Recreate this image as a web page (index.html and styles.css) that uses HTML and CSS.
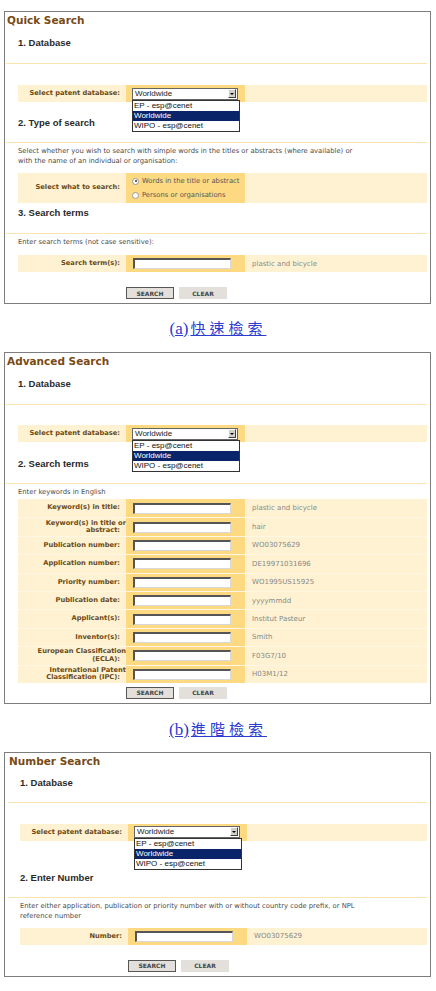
FILE: index.html
```html
<!DOCTYPE html>
<html lang="zh-Hant">
<head>
    <meta charset="UTF-8">
    <meta name="viewport" content="width=device-width, initial-scale=1.0">
    <title>esp@cenet 檢索</title>
    <link rel="stylesheet" href="styles.css">
</head>
<body>
    <!-- (a) quick search -->
    <div class="panel first">
        <div class="panel-title">Quick Search</div>
        <div class="step mt6">1. Database</div>
        <div class="rule mt12"></div>
        <div class="form-row mt21">
            <div class="label">Select patent database:</div>
            <div class="field">
                <div class="select">
                    <span class="select-value">Worldwide</span>
                    <span class="select-arrow"></span>
                    <ul class="select-list">
                        <li>EP - esp@cenet</li>
                        <li class="on">Worldwide</li>
                        <li>WIPO - esp@cenet</li>
                    </ul>
                </div>
            </div>
            <div class="hint"></div>
        </div>
        <div class="step mt13">2. Type of search</div>
        <div class="rule mt11"></div>
        <div class="note mt3">Select whether you wish to search with simple words in the titles or abstracts (where available) or<br>with the name of an individual or organisation:</div>
        <div class="form-row choice-row mt7">
            <div class="label">Select what to search:</div>
            <div class="field choices">
                <div class="choice"><span class="radio checked"></span>Words in the title or abstract</div>
                <div class="choice"><span class="radio"></span>Persons or organisations</div>
            </div>
            <div class="hint"></div>
        </div>
        <div class="step mt2">3. Search terms</div>
        <div class="rule mt12"></div>
        <div class="note mt3">Enter search terms (not case sensitive):</div>
        <div class="form-row mt8">
            <div class="label">Search term(s):</div>
            <div class="field"><input class="text-input" type="text"></div>
            <div class="hint">plastic and bicycle</div>
        </div>
        <div class="buttons mt15">
            <button class="btn default">SEARCH</button>
            <button class="btn">CLEAR</button>
        </div>
    </div>

    <div class="caption"><span class="caption-text">(a)<span class="caption-zh">快速檢索</span></span></div>

    <!-- (b) advanced search -->
    <div class="panel">
        <div class="panel-title">Advanced Search</div>
        <div class="step mt6">1. Database</div>
        <div class="rule mt12"></div>
        <div class="form-row mt20">
            <div class="label">Select patent database:</div>
            <div class="field">
                <div class="select">
                    <span class="select-value">Worldwide</span>
                    <span class="select-arrow"></span>
                    <ul class="select-list">
                        <li>EP - esp@cenet</li>
                        <li class="on">Worldwide</li>
                        <li>WIPO - esp@cenet</li>
                    </ul>
                </div>
            </div>
            <div class="hint"></div>
        </div>
        <div class="step mt14">2. Search terms</div>
        <div class="rule mt11"></div>
        <div class="note mt3">Enter keywords in English</div>
        <div class="form-table mt2">
            <div class="form-row tall">
                <div class="label">Keyword(s) in title:</div>
                <div class="field"><input class="text-input" type="text"></div>
                <div class="hint">plastic and bicycle</div>
            </div>
            <div class="form-row tall">
                <div class="label"><span class="over">Keyword(s) in title or</span>abstract:</div>
                <div class="field"><input class="text-input" type="text"></div>
                <div class="hint">hair</div>
            </div>
            <div class="form-row tall">
                <div class="label">Publication number:</div>
                <div class="field"><input class="text-input" type="text"></div>
                <div class="hint">WO03075629</div>
            </div>
            <div class="form-row tall">
                <div class="label">Application number:</div>
                <div class="field"><input class="text-input" type="text"></div>
                <div class="hint">DE19971031696</div>
            </div>
            <div class="form-row tall">
                <div class="label">Priority number:</div>
                <div class="field"><input class="text-input" type="text"></div>
                <div class="hint">WO1995US15925</div>
            </div>
            <div class="form-row tall">
                <div class="label">Publication date:</div>
                <div class="field"><input class="text-input" type="text"></div>
                <div class="hint">yyyymmdd</div>
            </div>
            <div class="form-row tall">
                <div class="label">Applicant(s):</div>
                <div class="field"><input class="text-input" type="text"></div>
                <div class="hint">Institut Pasteur</div>
            </div>
            <div class="form-row tall">
                <div class="label">Inventor(s):</div>
                <div class="field"><input class="text-input" type="text"></div>
                <div class="hint">Smith</div>
            </div>
            <div class="form-row tall">
                <div class="label"><span class="over">European Classification</span>(ECLA):</div>
                <div class="field"><input class="text-input" type="text"></div>
                <div class="hint">F03G7/10</div>
            </div>
            <div class="form-row tall">
                <div class="label"><span class="over">International Patent</span>Classification (IPC):</div>
                <div class="field"><input class="text-input" type="text"></div>
                <div class="hint">H03M1/12</div>
            </div>
        </div>
        <div class="buttons mt4">
            <button class="btn default">SEARCH</button>
            <button class="btn">CLEAR</button>
        </div>
    </div>

    <div class="caption lower"><span class="caption-text">(b)<span class="caption-zh">進階檢索</span></span></div>

    <!-- number search -->
    <div class="panel shifted">
        <div class="panel-title">Number Search</div>
        <div class="step mt5">1. Database</div>
        <div class="rule mt11"></div>
        <div class="form-row mt21">
            <div class="label">Select patent database:</div>
            <div class="field">
                <div class="select">
                    <span class="select-value">Worldwide</span>
                    <span class="select-arrow"></span>
                    <ul class="select-list">
                        <li>EP - esp@cenet</li>
                        <li class="on">Worldwide</li>
                        <li>WIPO - esp@cenet</li>
                    </ul>
                </div>
            </div>
            <div class="hint"></div>
        </div>
        <div class="step mt29">2. Enter Number</div>
        <div class="rule mt11"></div>
        <div class="note mt3">Enter either application, publication or priority number with or without country code prefix, or NPL<br>reference number</div>
        <div class="form-row mt7">
            <div class="label">Number:</div>
            <div class="field"><input class="text-input" type="text"></div>
            <div class="hint">WO03075629</div>
        </div>
        <div class="buttons mt15">
            <button class="btn default">SEARCH</button>
            <button class="btn">CLEAR</button>
        </div>
    </div>
</body>
</html>
```

FILE: styles.css
```css
body {
    margin: 0;
    background: #fff;
    font-family: "Liberation Sans", Arial, sans-serif;
    color: #222;
}

/* spacing helpers */
.mt2 { margin-top: 2px; }
.mt3 { margin-top: 3px; }
.mt4 { margin-top: 4px; }
.mt5 { margin-top: 5px; }
.mt6 { margin-top: 6px; }
.mt7 { margin-top: 7px; }
.mt8 { margin-top: 8px; }
.mt11 { margin-top: 11px; }
.mt12 { margin-top: 12px; }
.mt13 { margin-top: 13px; }
.mt14 { margin-top: 14px; }
.mt15 { margin-top: 15px; }
.mt20 { margin-top: 20px; }
.mt21 { margin-top: 21px; }
.mt29 { margin-top: 29px; }

.panel {
    position: relative;
    width: 425px;
    margin-left: 4px;
    padding-bottom: 4px;
    border: 1px solid #7d7d7d;
}
.panel.first { margin-top: 11px; }
.panel.shifted {
    width: 423px;
    padding-left: 2px;
}

.panel-title {
    padding-left: 2px;
    font: bold 10.5px/17px "DejaVu Sans", Verdana, sans-serif;
    color: #7a4a14;
}

.step {
    padding-left: 13px;
    font-size: 9.5px;
    font-weight: bold;
    line-height: 16px;
    color: #2a2a2a;
}

.rule {
    height: 1px;
    margin-right: 3px;
    margin-left: 1px;
    background: #fbe4ad;
}

.note {
    padding-left: 13px;
    font-family: "DejaVu Sans", Verdana, sans-serif;
    font-size: 6.8px;
    line-height: 10px;
    color: #4a4a4a;
}

/* label | field | example rows */
.form-row {
    display: grid;
    grid-template-columns: 108px 119px 1fr;
    height: 17px;
    margin-right: 3px;
    margin-left: 13px;
    background: #fef2d2;
}
.form-row.choice-row { height: 30px; }
.form-row.tall {
    height: 18.4px;
    box-sizing: border-box;
    border-top: 1px solid #fff7e4;
}
.form-row.tall:first-child { border-top: none; }

.form-row .label {
    align-self: center;
    padding-right: 6px;
    font: bold 6.7px/7.5px "DejaVu Sans", Verdana, sans-serif;
    color: #6b4916;
    text-align: right;
}
.label .over {
    display: block;
    margin-right: -6px;
}
.form-row .field {
    display: flex;
    align-items: center;
    padding-left: 6px;
    background: #fdd981;
}
.form-row .hint {
    align-self: center;
    padding-left: 7px;
    font: 7px "DejaVu Sans", Verdana, sans-serif;
    color: #888;
}

/* open dropdown */
.select {
    position: relative;
    width: 106px;
    height: 12px;
    box-sizing: border-box;
    border: 1px solid #666;
    background: #fff;
    font-size: 8px;
    line-height: 10px;
}
.select-value { padding-left: 2px; }
.select-arrow {
    position: absolute;
    top: 0;
    right: 1px;
    width: 8px;
    height: 9px;
    box-sizing: border-box;
    border: 1px solid;
    border-color: #fff #404040 #404040 #fff;
    background: #d4d0c8;
}
.select-arrow::after {
    content: "";
    position: absolute;
    top: 3px;
    left: 1px;
    border-top: 2px solid #000;
    border-right: 2px solid transparent;
    border-left: 2px solid transparent;
}
.select-list {
    position: absolute;
    top: 11px;
    left: -1px;
    z-index: 2;
    width: 106px;
    margin: 0;
    padding: 0;
    list-style: none;
    border: 1px solid #333;
    background: #fff;
}
.select-list li {
    height: 10px;
    padding-left: 1px;
    line-height: 10px;
    color: #111;
}
.select-list li.on {
    background: #0a246a;
    color: #fff;
}

.text-input {
    width: 98px;
    height: 11px;
    box-sizing: border-box;
    margin: 0 0 0 1px;
    padding: 0;
    border-style: solid;
    border-width: 2px 1px 1px 2px;
    border-color: #555 #d8d8d8 #d8d8d8 #555;
    background: #fff;
}

.field.choices {
    flex-direction: column;
    align-items: flex-start;
    justify-content: center;
    gap: 4px;
}
.choice {
    display: flex;
    align-items: center;
    font: 6.8px/10px "DejaVu Sans", Verdana, sans-serif;
    color: #555;
}
.radio {
    position: relative;
    width: 5px;
    height: 5px;
    margin-right: 3px;
    border: 1px solid #999;
    border-radius: 50%;
    background: #fff;
}
.radio.checked::after {
    content: "";
    position: absolute;
    top: 1.5px;
    left: 1.5px;
    width: 2px;
    height: 2px;
    border-radius: 50%;
    background: #333;
}

.buttons {
    display: flex;
    gap: 5px;
    padding-left: 121px;
}
.btn {
    width: 48px;
    height: 12px;
    box-sizing: border-box;
    padding: 0;
    border: 1px solid transparent;
    background: #e3e0db;
    font: bold 6px "DejaVu Sans", Verdana, sans-serif;
    color: #444;
}
.btn.default { border-color: #555; }

.caption {
    display: flex;
    align-items: center;
    justify-content: center;
    height: 48px;
}
.caption.lower { padding-top: 3px; height: 45px; }
.caption-text {
    font-family: "Liberation Serif", "Noto Sans CJK TC", serif;
    font-size: 17px;
    color: #2b3ccf;
    text-decoration: underline;
}
.caption-zh {
    margin-left: 2px;
    font-family: "Noto Sans CJK TC", sans-serif;
    font-size: 15px;
    letter-spacing: 4px;
}
```
